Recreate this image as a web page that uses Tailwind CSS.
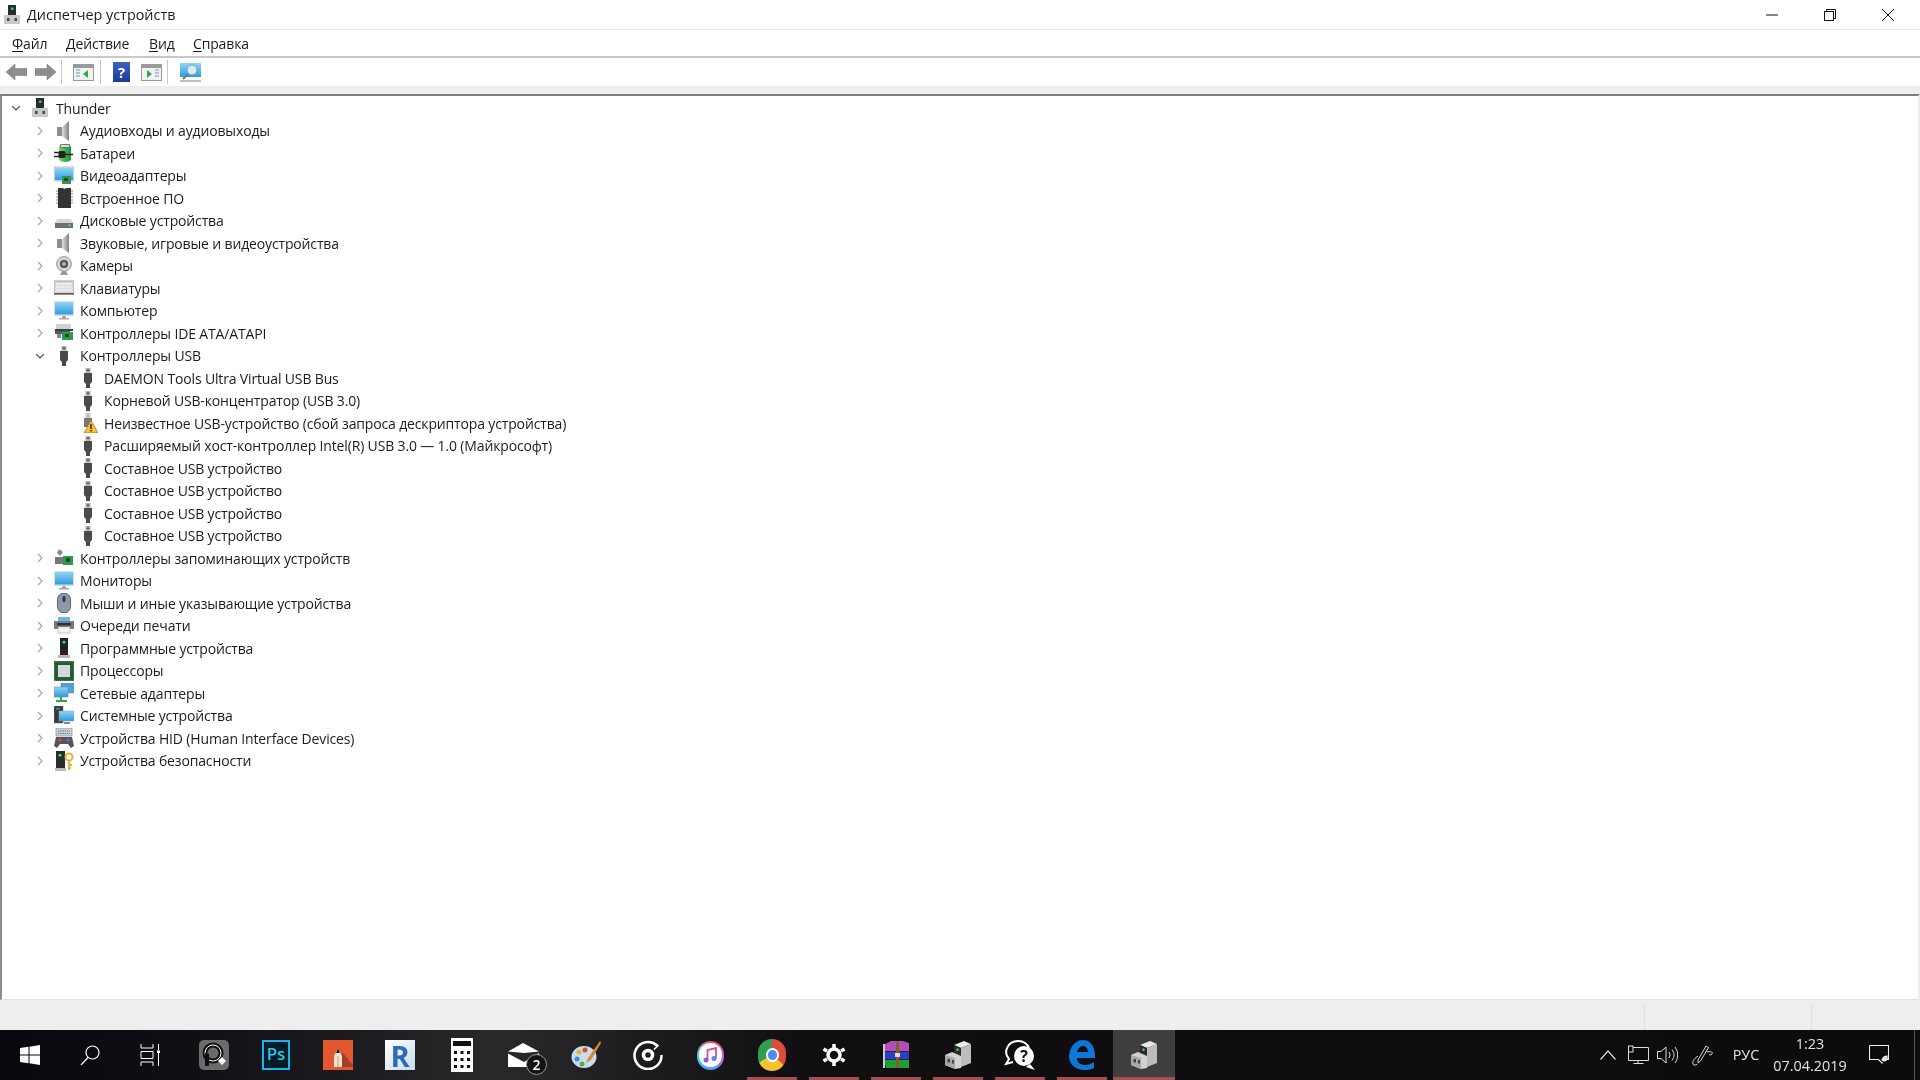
<!DOCTYPE html>
<html lang="ru">
<head>
    <meta charset="UTF-8">
    <meta name="viewport" content="width=device-width, initial-scale=1.0">
    <title>Диспетчер устройств</title>
    <script src="https://cdn.jsdelivr.net/npm/@tailwindcss/browser@4"></script>
</head>
<body class="bg-white">
    <!-- icon sprites -->
    <svg class="absolute h-0 w-0" xmlns="http://www.w3.org/2000/svg">
        <defs>
            <linearGradient id="g-screen" x1="0" y1="0" x2="0" y2="1"><stop offset="0" stop-color="#8fd6f7"/><stop offset="1" stop-color="#2b9ce0"/></linearGradient>
            <linearGradient id="g-gray" x1="0" y1="0" x2="1" y2="0"><stop offset="0" stop-color="#e0e0e0"/><stop offset="1" stop-color="#808080"/></linearGradient>
            <linearGradient id="g-help" x1="0" y1="0" x2="0" y2="1"><stop offset="0" stop-color="#3d62c4"/><stop offset="1" stop-color="#1d3a95"/></linearGradient>
            <linearGradient id="g-green" x1="0" y1="0" x2="1" y2="0"><stop offset="0" stop-color="#6fd66a"/><stop offset="1" stop-color="#1f8f3a"/></linearGradient>
        </defs>
        <symbol id="i-pc" viewBox="0 0 20 20"><rect x="6" y="0" width="8" height="10" fill="#2b2b2b"/><rect x="9" y="2.500" width="2.500" height="2.500" fill="#35c85a"/><rect x="2" y="10" width="16" height="9" fill="#c8c8c8"/><rect x="5" y="13" width="2.500" height="3" fill="#4a4a4a"/><rect x="12.500" y="13" width="2.500" height="3" fill="#4a4a4a"/></symbol>
        <symbol id="i-audio" viewBox="0 0 20 20"><rect x="3" y="6" width="5" height="9" fill="#8d8d8d"/><path d="M8 6 15 0v20l-7-5z" fill="url(#g-gray)"/></symbol>
        <symbol id="i-battery" viewBox="0 0 20 20"><path d="M5 5c0-2 2-4 6-4s6 2 6 4v11c0 2-3 3-6 3s-6-1-6-3z" fill="url(#g-green)"/><path d="M6.500 1.500h9v3h-9z" fill="#dcdcdc" stroke="#555" stroke-width=".7"/><rect x="4.500" y="8" width="7" height="7" rx="1.500" fill="#222"/><path d="M0 9.500h5M0 13.500h5M11 11.500h8" stroke="#222" stroke-width="1.500"/></symbol>
        <symbol id="i-display" viewBox="0 0 20 20"><rect x="0" y="1" width="20" height="14" fill="#e8e8e8" stroke="#999" stroke-width=".6"/><rect x="1" y="2" width="18" height="12" fill="url(#g-screen)"/><rect x="8" y="10" width="9" height="8" fill="#3d8f4c"/><rect x="10" y="12" width="4" height="3" fill="#1e4f28"/></symbol>
        <symbol id="i-firmware" viewBox="0 0 20 20"><path d="M4 0h5a2 2 0 0 0 3 0h5v20H4z" fill="#333"/><path d="M2 3h2M2 6h2M2 9h2M2 12h2M2 15h2M17 3h2M17 6h2M17 9h2M17 12h2M17 15h2" stroke="#888" stroke-width="1"/></symbol>
        <symbol id="i-disk" viewBox="0 0 20 20"><path d="M3 8h14l2 4H1z" fill="#d7d7d7"/><rect x="1" y="12" width="18" height="5" fill="#6e6e6e"/><rect x="14" y="13.500" width="3" height="1.500" fill="#54d66a"/></symbol>
        <symbol id="i-camera" viewBox="0 0 20 20"><circle cx="10" cy="8" r="7.500" fill="#d2d2d2" stroke="#8a8a8a" stroke-width=".8"/><circle cx="10" cy="8" r="4" fill="#4d4d4d"/><circle cx="10" cy="8" r="2" fill="#9fb8d8"/><path d="M8 15h4l2 4H6z" fill="#9a9a9a"/></symbol>
        <symbol id="i-keyboard" viewBox="0 0 20 20"><rect x="0" y="3" width="20" height="13" fill="#d8dde2" stroke="#8e8e8e" stroke-width=".8"/><path d="M2 6h16M2 9h16M2 12h16" stroke="#f7f7f7" stroke-width="1.500" stroke-dasharray="1.500 .7"/><rect x="0" y="15" width="20" height="1.500" fill="#555"/></symbol>
        <symbol id="i-monitor" viewBox="0 0 20 20"><rect x="0" y="0" width="20" height="15" fill="#dedede"/><rect x="1" y="1" width="18" height="12.500" fill="url(#g-screen)"/><path d="M8 15h4v2h3v1.500H5V17h3z" fill="#a8a8a8"/></symbol>
        <symbol id="i-ide" viewBox="0 0 20 20"><rect x="2" y="1" width="15" height="5" fill="#d0d0d0"/><rect x="1" y="6" width="15" height="5" fill="#5a5a5a"/><rect x="1" y="6" width="18" height="2" fill="#3e3e3e"/><rect x="8" y="9" width="11" height="8" fill="#2e9a50"/><rect x="11" y="11" width="4" height="3" fill="#0f4d22"/><rect x="3" y="11" width="4" height="4" fill="#8a8a8a"/></symbol>
        <symbol id="i-usb" viewBox="0 0 20 20"><path d="M7.500 0h5v5h-5z" fill="#b5b5b5"/><rect x="8.500" y="1.500" width="3" height="1.500" fill="#555"/><path d="M6 5h8v9l-2 2v4H8v-4l-2-2z" fill="#4a4a4a"/></symbol>
        <symbol id="i-usb-warn" viewBox="0 0 20 20"><path d="M7.500 0h5v5h-5z" fill="#c5c5c5"/><path d="M6 5h8v9H6z" fill="#777"/><path d="M13 7 20 20H6z" fill="#f7c02d" stroke="#8a6a10" stroke-width=".6"/><path d="M13 11v5M13 17v1.500" stroke="#222" stroke-width="1.400"/></symbol>
        <symbol id="i-storage" viewBox="0 0 20 20"><path d="M5 1l4 3-3 4-3-3z" fill="#8a8a8a"/><rect x="1" y="9" width="13" height="7" fill="#777"/><rect x="9" y="8" width="10" height="9" fill="#2e9a50"/><rect x="12" y="10" width="4" height="4" fill="#124f25"/></symbol>
        <symbol id="i-mouse" viewBox="0 0 20 20"><rect x="3.500" y="0" width="13" height="20" rx="6.500" fill="#8d9aad" stroke="#444" stroke-width=".8"/><rect x="8.500" y="3" width="3" height="6" rx="1.500" fill="#30363f"/></symbol>
        <symbol id="i-printer" viewBox="0 0 20 20"><rect x="4" y="1" width="12" height="5" fill="#6fb4e6"/><rect x="0" y="5" width="20" height="8" fill="#7a7a7a"/><rect x="3" y="7" width="14" height="2.500" fill="#333"/><rect x="4" y="11" width="12" height="6" fill="#f4f4f4" stroke="#999" stroke-width=".5"/></symbol>
        <symbol id="i-software" viewBox="0 0 20 20"><rect x="6" y="0" width="8" height="18" fill="#242424"/><rect x="8.500" y="3" width="3" height="2.500" fill="#3ddc5e"/><rect x="4" y="17" width="12" height="3" fill="#b8b8b8"/></symbol>
        <symbol id="i-cpu" viewBox="0 0 20 20"><rect x="0" y="0" width="20" height="20" fill="#1f5e36"/><rect x="0" y="0" width="20" height="20" fill="none" stroke="#c79a3b" stroke-width="1" stroke-dasharray="1 1"/><rect x="4" y="4" width="12" height="12" fill="#d8d8d8"/></symbol>
        <symbol id="i-network" viewBox="0 0 20 20"><rect x="7" y="0" width="13" height="10" fill="#4aa4e0" stroke="#888" stroke-width=".6"/><rect x="0" y="4" width="14" height="10" fill="url(#g-screen)" stroke="#888" stroke-width=".6"/><path d="M7 14v3M2 18h11" stroke="#35a845" stroke-width="2"/></symbol>
        <symbol id="i-system" viewBox="0 0 20 20"><rect x="0" y="0" width="9" height="17" fill="#3a3a3a" stroke="#777" stroke-width=".6"/><rect x="2" y="2" width="4" height="1.500" fill="#3fa34d"/><rect x="5" y="5" width="15" height="10" fill="url(#g-screen)" stroke="#999" stroke-width=".5"/><path d="M10 17h6" stroke="#888" stroke-width="2"/></symbol>
        <symbol id="i-hid" viewBox="0 0 20 20"><rect x="2" y="0" width="16" height="8" fill="#cfd4d9" stroke="#777" stroke-width=".6"/><path d="M4 3h12M4 5.500h12" stroke="#777" stroke-width="1" stroke-dasharray="1.500 .7"/><path d="M2 9h16l2 9-3 2-3-4H6l-3 4-3-2z" fill="#555"/><circle cx="6" cy="12" r="1.400" fill="#d84b3c"/><circle cx="14" cy="12" r="1.400" fill="#3b7dd8"/></symbol>
        <symbol id="i-security" viewBox="0 0 20 20"><rect x="2" y="0" width="9" height="18" fill="#2a2a2a"/><rect x="4.500" y="3" width="3" height="2.500" fill="#3ddc5e"/><rect x="1" y="17" width="11" height="3" fill="#bbb"/><circle cx="15" cy="6" r="3.500" fill="none" stroke="#e8b23a" stroke-width="2"/><path d="M15 9.500V19M15 14h3M15 17h2" stroke="#e8b23a" stroke-width="2"/></symbol>
        <symbol id="i-devmgr" viewBox="0 0 26 28"><path d="M9 4 19 0l7 3-10 4z" fill="#e8e8e8"/><path d="M16 7 26 3v19l-10 4z" fill="#bdbdbd"/><path d="M9 4l7 3v9l-7-3z" fill="#2b2b2b"/><rect x="11.500" y="7.500" width="2" height="2.500" fill="#3ddc5e"/><path d="M0 14l7-3 9 4v12l-6 1-10-4z" fill="#d2d2d2"/><path d="M0 14l10 3v11l-10-4z" fill="#a9a9a9"/><rect x="2.500" y="18" width="2.500" height="3.500" fill="#444"/><rect x="7" y="19" width="2" height="3.500" fill="#444"/></symbol>
    </svg>

    <div class="flex h-[1080px] w-[1920px] flex-col overflow-hidden bg-white font-['Open_Sans',sans-serif] text-[14px] tracking-[-0.15px] text-[#1c1c1c] blur-[0.35px]">
        <!-- title bar -->
        <header class="flex h-[30px] shrink-0 items-center border-b border-[#e6e6e6] pl-[2px]">
            <svg class="h-[20px] w-[20px]"><use href="#i-pc"/></svg>
            <span class="ml-[5px] text-[14.4px] tracking-normal">Диспетчер устройств</span>
            <div class="ml-auto flex h-full pr-[3px]">
                <div class="flex w-[58px] items-center justify-center"><svg class="h-[12px] w-[12px]" viewBox="0 0 12 12"><path d="M0 6h12" stroke="#111" stroke-width="1"/></svg></div>
                <div class="flex w-[58px] items-center justify-center"><svg class="h-[12px] w-[12px]" viewBox="0 0 12 12" fill="none" stroke="#111"><rect x=".5" y="2.500" width="9" height="9"/><path d="M2.500 2.500v-2h9v9h-2"/></svg></div>
                <div class="flex w-[58px] items-center justify-center"><svg class="h-[12px] w-[12px]" viewBox="0 0 12 12"><path d="M0 0 12 12M12 0 0 12" stroke="#111" stroke-width="1"/></svg></div>
            </div>
        </header>

        <!-- menu -->
        <nav class="flex h-[28px] shrink-0 items-center border-b-2 border-[#c9c9c9]">
            <span class="ml-[12px] w-[54px]"><u class="underline-offset-2">Ф</u>айл</span>
            <span class="w-[83px]"><u class="underline-offset-2">Д</u>ействие</span>
            <span class="w-[44px]"><u class="underline-offset-2">В</u>ид</span>
            <span><u class="underline-offset-2">С</u>правка</span>
        </nav>

        <!-- toolbar -->
        <div class="flex h-[28px] shrink-0 items-center">
            <svg class="ml-[6px] h-[16px] w-[21px]" viewBox="0 0 21 16"><path d="M9 0v4.500h12v7H9V16L0 8z" fill="#8e8e8e" stroke="#777" stroke-width=".5"/></svg>
            <svg class="ml-[8px] h-[16px] w-[21px]" viewBox="0 0 21 16"><path d="M12 0v4.500H0v7h12V16l9-8z" fill="#8e8e8e" stroke="#777" stroke-width=".5"/></svg>
            <div class="ml-[5px] h-[24px] w-px bg-[#c8c8c8]"></div>
            <svg class="ml-[11px] h-[17px] w-[21px]" viewBox="0 0 21 17"><rect x=".5" y=".5" width="20" height="16" fill="#f2f2f2" stroke="#9a9a9a"/><rect x="1" y="1" width="19" height="3" fill="#9a9a9a"/><path d="M3 6h4M3 9h4M3 12h4" stroke="#6f93c4"/><path d="M15 6v8l-5-4z" fill="#35a845"/></svg>
            <div class="ml-[6px] h-[24px] w-px bg-[#c8c8c8]"></div>
            <svg class="ml-[12px] h-[20px] w-[17px]" viewBox="0 0 17 20"><rect width="17" height="20" fill="url(#g-help)"/><text x="8.500" y="16" text-anchor="middle" font-family="Open Sans" font-weight="700" font-size="15" fill="#fff">?</text></svg>
            <svg class="ml-[11px] h-[17px] w-[21px]" viewBox="0 0 21 17"><rect x=".5" y=".5" width="20" height="16" fill="#f2f2f2" stroke="#9a9a9a"/><rect x="1" y="1" width="19" height="3" fill="#9a9a9a"/><path d="M14 6h4M14 9h4M14 12h4" stroke="#6f93c4"/><path d="M6 6v8l5-4z" fill="#35a845"/></svg>
            <div class="ml-[5px] h-[24px] w-px bg-[#c8c8c8]"></div>
            <svg class="ml-[12px] h-[19px] w-[21px]" viewBox="0 0 21 19"><rect x="0" y="0" width="21" height="14" fill="url(#g-screen)"/><circle cx="12" cy="7" r="5" fill="#d5ecf8" stroke="#7a9ab0"/><path d="M8 11 3 16" stroke="#777" stroke-width="2"/><path d="M0 18h21" stroke="#aaa" stroke-width="1.500"/></svg>
        </div>
        <div class="h-[8px] shrink-0 bg-[#eeeeee]"></div>

        <!-- device tree -->
        <main id="tree" class="min-h-0 flex-1 border-t-2 border-l-2 border-r-2 border-b border-t-[#7d7d7d] border-l-[#8c8c8c] border-r-[#eeeeee] border-b-[#e2e2e2] pt-[1px]"></main>

        <!-- status bar -->
        <div class="flex h-[30px] shrink-0 bg-[#eeeeee] pt-[4px]">
            <div class="flex-1 border-r border-[#e0e0e0]"></div>
            <div class="w-[167px] border-r border-[#e0e0e0]"></div>
            <div class="w-[108px]"></div>
        </div>

        <!-- taskbar -->
        <footer class="flex h-[50px] shrink-0 items-stretch bg-[linear-gradient(90deg,#08080f_0%,#0f0f14_10%,#29292c_26%,#1d1b1e_34%,#100e10_42%,#0d0b0c_100%)] text-[14.4px] tracking-normal text-[#e4e4e4]">
            <div class="flex w-[60px] items-center justify-center"><svg class="h-[20px] w-[20px]" viewBox="0 0 20 20" fill="#fff"><path d="M0 3l8.500-1.200v7.700H0zM9.500 1.700 20 0v9.500H9.500zM0 10.500h8.500v7.700L0 17zM9.500 10.500H20V20L9.500 18.300z"/></svg></div>
            <div class="flex w-[60px] items-center justify-center"><svg class="h-[20px] w-[20px]" viewBox="0 0 20 20" fill="none" stroke="#fff" stroke-width="1.200"><circle cx="12.500" cy="7.500" r="6.500"/><path d="M8 12.500 1 20"/></svg></div>
            <div class="flex w-[63px] items-center justify-center pr-[3px]"><svg class="h-[22px] w-[20px]" viewBox="0 0 20 22" fill="none" stroke="#fff" stroke-width="1"><path d="M1 0v4h12V0M1 7.500h12v7H1zM1 22v-4h12v4M18.500 0v6M18.500 9v13"/><rect x="17" y="6.500" width="3" height="2.500" fill="#fff" stroke="none"/></svg></div>

            <div class="flex w-[62px] items-center justify-center"><svg class="h-[30px] w-[30px]" viewBox="0 0 30 30"><rect width="30" height="30" rx="5" fill="#6b6b6b"/><circle cx="14" cy="13" r="8" fill="none" stroke="#111" stroke-width="5"/><circle cx="14" cy="13" r="8" fill="none" stroke="#fff" stroke-width="1"/><path d="M6 13v13h4V14" fill="#111"/><path d="M23 17l4 4-4 4-4-4z" fill="#fff"/></svg></div>
            <div class="flex w-[62px] items-center justify-center"><div class="flex h-[30px] w-[28px] items-center justify-center border-2 border-[#19b4f0] bg-[#001d26] pb-[2px] text-[17px] font-semibold text-[#31c5f0]">Ps</div></div>
            <div class="flex w-[62px] items-center justify-center"><svg class="h-[30px] w-[30px]" viewBox="0 0 30 30"><rect width="30" height="30" fill="#e2572f"/><path d="M15 27h15v-2L19 12z" fill="#a63e25"/><path d="M11 27V16l4-8 4 8v11z" fill="#efe2cb"/><path d="M15 8l-2 5h4z" fill="#222"/><path d="M15 16v11" stroke="#b9a78b"/></svg></div>
            <div class="flex w-[62px] items-center justify-center"><div class="flex h-[30px] w-[30px] items-center justify-center bg-[linear-gradient(135deg,#ffffff,#c5dcf2)] text-[29px] font-bold leading-none text-[#2d6cb2]">R</div></div>
            <div class="flex w-[62px] items-center justify-center"><svg class="h-[34px] w-[22px]" viewBox="0 0 22 34"><rect width="22" height="34" fill="#fff"/><rect x="2" y="3" width="18" height="5" fill="#111"/><path d="M3 13h3v3H3zM9.500 13h3v3h-3zM16 13h3v3h-3zM3 20h3v3H3zM9.500 20h3v3h-3zM16 20h3v3h-3zM3 27h3v3H3zM9.500 27h3v3h-3zM16 27h3v3h-3z" fill="#111"/></svg></div>
            <div class="relative flex w-[62px] items-center justify-center">
                <svg class="mr-[1px] h-[24px] w-[31px]" viewBox="0 0 31 24"><path d="M0 8.500 15 0l16 8.500-15 1.500z" fill="#fff"/><path d="M0 10.500l16 8.500 15-9V24H0z" fill="#fff"/></svg>
                <span class="absolute left-[33px] top-[24px] flex h-[21px] w-[21px] items-center justify-center rounded-full border border-[#9a9a9a] bg-[#141414] text-[14px] font-semibold text-white">2</span>
            </div>
            <div class="flex w-[62px] items-center justify-center"><svg class="h-[32px] w-[30px]" viewBox="0 0 30 32"><ellipse cx="13" cy="18" rx="12.500" ry="11" fill="#c7dcec"/><circle cx="8" cy="13" r="2.500" fill="#e8b32e"/><circle cx="14" cy="11" r="2.500" fill="#d84a3a"/><circle cx="6" cy="20" r="2.500" fill="#3a8fd8"/><circle cx="11" cy="25" r="2.500" fill="#55b04a"/><path d="M29 2 17 19l-2 5 5-3L30 4z" fill="#d78a2f"/></svg></div>
            <div class="flex w-[62px] items-center justify-center"><svg class="h-[30px] w-[30px]" viewBox="0 0 30 30" fill="none" stroke="#fff"><path d="M24 5.500A13.500 13.500 0 1 0 28.500 15" stroke-width="2.500"/><path d="M20 2l5 3.500-4 4" stroke-width="1.500"/><circle cx="15" cy="15" r="4.500" stroke-width="3.500"/></svg></div>
            <div class="flex w-[62px] items-center justify-center"><div class="flex h-[29px] w-[27px] items-center justify-center rounded-full bg-[conic-gradient(#f8466a,#c55bd8,#4aa8f0,#35d0e8,#f8466a)]"><div class="flex h-[24px] w-[23px] items-center justify-center rounded-full bg-white"><svg class="h-[16px] w-[14px]" viewBox="0 0 14 16"><path d="M4.500 13V3L13 1v10" fill="none" stroke="#d94a9c" stroke-width="1.800"/><circle cx="3" cy="13" r="2.500" fill="#8a5cd8"/><circle cx="11" cy="11.500" r="2.500" fill="#4a8cf0"/></svg></div></div></div>
            <div class="relative flex w-[62px] items-center justify-center"><div class="h-[32px] w-[28px] rounded-full bg-[conic-gradient(#dd4b3e_0deg_130deg,#f3c22f_130deg_240deg,#2f9e50_240deg_360deg)]"></div><div class="absolute h-[14px] w-[13px] rounded-full border-2 border-white bg-[#4a8cf0]"></div><div class="absolute bottom-0 left-[6px] h-[3px] w-[50px] bg-[#a3504e]"></div></div>
            <div class="relative flex w-[62px] items-center justify-center"><svg class="h-[26px] w-[24px]" viewBox="0 0 24 24" fill="none" stroke="#fff"><circle cx="12" cy="12" r="6" stroke-width="3.500"/><path d="M12 1v4M12 19v4M1.500 6l3.500 2M19 16l3.500 2M1.500 18 5 16M19 8l3.500-2" stroke-width="3.500"/></svg><div class="absolute bottom-0 left-[6px] h-[3px] w-[50px] bg-[#a3504e]"></div></div>
            <div class="relative flex w-[62px] items-center justify-center"><svg class="h-[28px] w-[26px]" viewBox="0 0 26 28"><path d="M2 3l6-3h12l6 2v8H2z" fill="#b04fb5"/><path d="M1 10.500h25v8H2z" fill="#2d3fc0"/><path d="M1 19h25v8H3z" fill="#1c9e34"/><path d="M1 3v24" stroke="#ccc" stroke-width="2"/><rect x="13" y="1" width="3" height="26" fill="#8a5a2b"/><rect x="12" y="12" width="5" height="4" fill="#ddd"/></svg><div class="absolute bottom-0 left-[6px] h-[3px] w-[50px] bg-[#a3504e]"></div></div>
            <div class="relative flex w-[62px] items-center justify-center"><svg class="h-[28px] w-[26px]"><use href="#i-devmgr"/></svg><div class="absolute bottom-0 left-[6px] h-[3px] w-[50px] bg-[#a3504e]"></div></div>
            <div class="relative flex w-[62px] items-center justify-center"><svg class="h-[32px] w-[32px]" viewBox="0 0 32 32"><path d="M14 2a12 11 0 0 0-9 18l-3 5 7-2" fill="none" stroke="#fff" stroke-width="2"/><path d="M14 2a11 10 0 0 1 11 7" fill="none" stroke="#fff" stroke-width="2"/><circle cx="20" cy="17" r="10" fill="#fff"/><path d="M26 25l5 6-9-3z" fill="#fff"/><text x="20" y="23" text-anchor="middle" font-family="Open Sans" font-weight="700" font-size="16" fill="#111">?</text></svg><div class="absolute bottom-0 left-[6px] h-[3px] w-[50px] bg-[#a3504e]"></div></div>
            <div class="relative flex w-[62px] items-center justify-center"><svg class="h-[30px] w-[26px]" viewBox="0 0 26 30"><path d="M0 16C1 6 7 0 14 0c7 0 12 6 12 16v2H8c0 5 4 7 8 7 3 0 6-1 9-3v6c-3 1.500-6 2-9 2C6 30 0 24 0 16zM8 12h11c0-3-2-6-5-6-3 0-5 3-6 6z" fill="#0a78d4"/></svg><div class="absolute bottom-0 left-[6px] h-[3px] w-[50px] bg-[#a3504e]"></div></div>
            <div class="relative flex w-[62px] items-center justify-center bg-[#413e40]"><svg class="h-[28px] w-[26px]"><use href="#i-devmgr"/></svg><div class="absolute inset-x-0 bottom-0 h-[3px] bg-[#a3504e]"></div></div>

            <!-- tray -->
            <div class="flex flex-1 items-center justify-end">
                <svg class="mr-[12px] h-[10px] w-[16px]" viewBox="0 0 16 10" fill="none" stroke="#ddd" stroke-width="1.200"><path d="M.5 9.500 8 1l7.500 8.500"/></svg>
                <svg class="mr-[8px] h-[20px] w-[21px]" viewBox="0 0 21 20" fill="none" stroke="#ddd"><path d="M5 2.500h15.500v13H.5V7M10 15.500v3M5.500 18.500h10"/><rect x=".5" y="1" width="4.500" height="6" fill="#0d0b0c"/></svg>
                <svg class="mr-[14px] h-[20px] w-[21px]" viewBox="0 0 21 20" fill="none" stroke="#ddd"><path d="M.5 6.500h3.500L9 2v16l-5-4.500H.5zM12 7a5 5 0 0 1 0 6M15 4.500a9 9 0 0 1 0 11M18 2a13 13 0 0 1 0 16"/></svg>
                <svg class="mr-[11px] h-[21px] w-[21px]" viewBox="0 0 21 21" fill="none" stroke="#ddd"><path d="M6 15 14 1l2.500 1.500L8.500 16l-2.500 2zM15 7c4-1 6 0 5 2-1 1.500-3 .5-3 .5M6 11c-3 2-6 5-5 8 .5 1.500 3 1.500 4 0"/></svg>
                <span class="w-[44px] text-center">РУС</span>
                <div class="flex w-[84px] flex-col items-center leading-[22px]"><span>1:23</span><span>07.04.2019</span></div>
                <svg class="ml-[17px] h-[20px] w-[20px]" viewBox="0 0 20 20" fill="none" stroke="#eee" stroke-width="1.100"><path d="M.5.500h19v14h-2M.5.500v14h9l4 4"/><path d="M13 15c3 2 6 0 5-4-2 0-4 1-5 4z" fill="#ddd"/></svg>
                <div class="ml-[25px] h-full w-px bg-[#555555]"></div>
                <div class="w-[5px]"></div>
            </div>
        </footer>
    </div>

    <script>
        const items = [
            { level: 0, icon: 'pc', text: 'Thunder', open: true },
            { level: 1, icon: 'audio', text: 'Аудиовходы и аудиовыходы' },
            { level: 1, icon: 'battery', text: 'Батареи' },
            { level: 1, icon: 'display', text: 'Видеоадаптеры' },
            { level: 1, icon: 'firmware', text: 'Встроенное ПО' },
            { level: 1, icon: 'disk', text: 'Дисковые устройства' },
            { level: 1, icon: 'audio', text: 'Звуковые, игровые и видеоустройства' },
            { level: 1, icon: 'camera', text: 'Камеры' },
            { level: 1, icon: 'keyboard', text: 'Клавиатуры' },
            { level: 1, icon: 'monitor', text: 'Компьютер' },
            { level: 1, icon: 'ide', text: 'Контроллеры IDE ATA/ATAPI' },
            { level: 1, icon: 'usb', text: 'Контроллеры USB', open: true },
            { level: 2, icon: 'usb', text: 'DAEMON Tools Ultra Virtual USB Bus' },
            { level: 2, icon: 'usb', text: 'Корневой USB-концентратор (USB 3.0)' },
            { level: 2, icon: 'usb-warn', text: 'Неизвестное USB-устройство (сбой запроса дескриптора устройства)' },
            { level: 2, icon: 'usb', text: 'Расширяемый хост-контроллер Intel(R) USB 3.0 — 1.0 (Майкрософт)' },
            { level: 2, icon: 'usb', text: 'Составное USB устройство' },
            { level: 2, icon: 'usb', text: 'Составное USB устройство' },
            { level: 2, icon: 'usb', text: 'Составное USB устройство' },
            { level: 2, icon: 'usb', text: 'Составное USB устройство' },
            { level: 1, icon: 'storage', text: 'Контроллеры запоминающих устройств' },
            { level: 1, icon: 'monitor', text: 'Мониторы' },
            { level: 1, icon: 'mouse', text: 'Мыши и иные указывающие устройства' },
            { level: 1, icon: 'printer', text: 'Очереди печати' },
            { level: 1, icon: 'software', text: 'Программные устройства' },
            { level: 1, icon: 'cpu', text: 'Процессоры' },
            { level: 1, icon: 'network', text: 'Сетевые адаптеры' },
            { level: 1, icon: 'system', text: 'Системные устройства' },
            { level: 1, icon: 'hid', text: 'Устройства HID (Human Interface Devices)' },
            { level: 1, icon: 'security', text: 'Устройства безопасности' },
        ];

        const indent = ['pl-[6px]', 'pl-[30px]', 'pl-[54px]'];

        const chevron = (item) => {
            if (item.level === 2) return '<span class="w-[16px]"></span>';
            const d = item.open ? 'M1 3l4 4 4-4' : 'M3 1l4 4-4 4';
            const color = item.open ? '#555555' : '#a8a8a8';
            return `<span class="flex w-[16px] justify-center"><svg class="h-[10px] w-[10px]" viewBox="0 0 10 10" fill="none" stroke="${color}" stroke-width="1.200"><path d="${d}"/></svg></span>`;
        };

        document.getElementById('tree').innerHTML = items.map(item => `
            <div class="flex h-[22.5px] items-center ${indent[item.level]}">
                ${chevron(item)}
                <svg class="mx-[6px] h-[20px] w-[20px] shrink-0"><use href="#i-${item.icon}"/></svg>
                <span class="whitespace-nowrap">${item.text}</span>
            </div>
        `).join('');
    </script>
</body>
</html>
